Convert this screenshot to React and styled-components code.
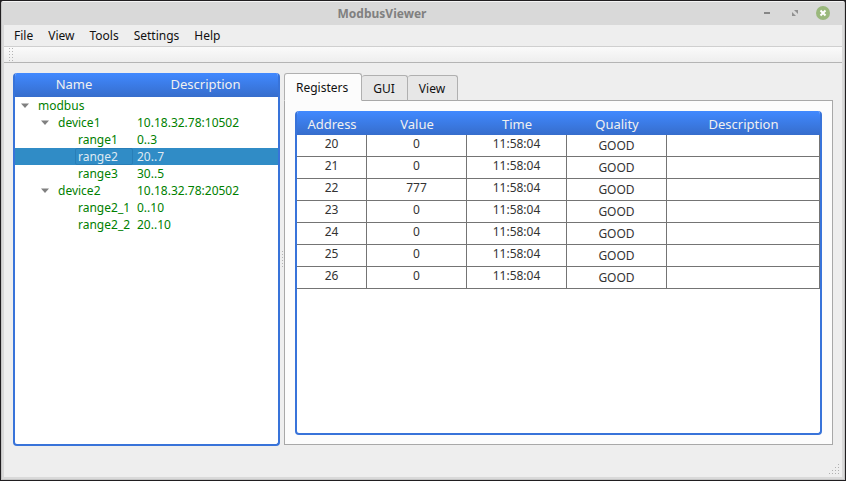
import React, { useState } from "react";
import styled, { createGlobalStyle, css } from "styled-components";

const GlobalStyle = createGlobalStyle`
  * { box-sizing: border-box; }
  body { margin: 0; background: #201e20; }
  button { font: inherit; color: inherit; border: 0; padding: 0; background: none; }
`;

const Desktop = styled.div`
  min-height: 100vh;
  padding: 1px;
  display: flex;
  background: #201e20;
  font: 12px/16px "Noto Sans", sans-serif;
  color: #111;
`;

const Window = styled.div`
  flex: 1;
  display: flex;
  flex-direction: column;
  padding: 0 2px 2px;
  background: #d9d9d9;
  border: 1px solid #c4c4c4;
  border-top-color: #f4f4f4;
  border-radius: 2px 2px 0 0;
`;

const TitleBar = styled.header`
  height: 23px;
  flex: none;
  display: grid;
  grid-template-columns: 1fr auto 1fr;
  align-items: center;
  color: #808080;
`;

const Title = styled.h1`
  grid-column: 2;
  margin: 0;
  padding-right: 82px;
  font-size: 12px;
  line-height: 22px;
  font-weight: 700;
`;

const WindowControls = styled.div`
  display: flex;
  justify-content: flex-end;
  gap: 14px;
  padding: 0 12px 2px 0;
`;

const ControlButton = styled.button`
  width: 14px;
  height: 14px;
  svg { display: block; }
`;

const Client = styled.div`
  flex: 1;
  display: flex;
  flex-direction: column;
  background: #eeeeee;
`;

const MenuBar = styled.nav`
  height: 21px;
  display: flex;
  gap: 15px;
  padding: 0 10px;
`;

const MenuButton = styled.button`
  line-height: 21px;
`;

const ToolBar = styled.div`
  height: 17px;
  padding-left: 5px;
  border-top: 1px solid #cfcfcf;
  border-bottom: 1px solid #b4b4b4;
  background: linear-gradient(#fafafa, #eeeeee);
`;

const Grip = styled.svg`
  display: block;
`;

const Workspace = styled.main`
  flex: 1;
  display: flex;
  padding: 10px 9px 0;
`;

const frame = css`
  border: 2px solid #3873d9;
  border-top: 0;
  border-radius: 4px;
  background: #fff;
  overflow: hidden;
`;

const TreePanel = styled.section`
  ${frame}
  flex: 0 0 267px;
`;

const Splitter = styled.div`
  flex: 0 0 4px;
  display: flex;
  align-items: center;
  justify-content: center;
`;

const SplitterGrip = styled.div`
  width: 1px;
  height: 18px;
  background: repeating-linear-gradient(#b4b4b4 0 1px, transparent 1px 3px);
`;

const Table = styled.table`
  width: 100%;
  table-layout: fixed;
  border-collapse: separate;
  border-spacing: 0;
`;

const HeaderRow = styled.tr`
  background: linear-gradient(#4189ff, #366dcc);
`;

const HeaderCell = styled.th`
  height: 24px;
  padding: ${(p) => (p.$low ? 2 : 0)}px 0 0;
  color: #f0f0f0;
  font-size: 13px;
  font-weight: 400;
  line-height: 22px;
  vertical-align: top;
`;

const Column = styled.col`
  width: ${(p) => (p.$width ? `${p.$width}px` : "auto")};
`;

const TreeRow = styled.tr`
  color: ${(p) => (p.$selected ? "#dfe9f2" : "#008000")};
  background: ${(p) => (p.$selected ? "#308cc6" : "transparent")};
`;

const TreeCell = styled.td`
  height: 17px;
  padding: 0 0 0 4px;
  white-space: nowrap;
`;

const TreeNameCell = styled.td`
  height: 17px;
  padding: 0 0 0 ${(p) => p.$level * 20}px;
`;

const TreeName = styled.div`
  display: flex;
  align-items: center;
  height: 17px;
`;

const Toggle = styled.button`
  width: 20px;
  height: 16px;
  padding-left: 6px;
  flex: none;
  svg { display: block; }
`;

const TreeLabel = styled.span`
  flex: 1;
  height: 17px;
  padding-left: 2px;
  border: 1px solid ${(p) => (p.$selected ? "#287eb7" : "transparent")};
  border-radius: 2px;
  line-height: 15px;
  white-space: nowrap;
`;

const Indent = styled.span`
  flex: 0 0 20px;
`;

const Detail = styled.section`
  flex: 1;
  min-width: 0;
  display: flex;
  flex-direction: column;
  padding-bottom: 1px;
`;

const TabList = styled.div`
  display: flex;
  align-items: flex-end;
  height: 28px;
  margin-bottom: -1px;
  z-index: 1;
`;

const Tab = styled.button`
  height: ${(p) => (p.$active ? 28 : 26)}px;
  padding: ${(p) => (p.$active ? "1px 13px 0 11px" : "2px 12px 0 11px")};
  border: 1px solid #b0b0b0;
  border-left-width: ${(p) => (p.$active ? 1 : 0)}px;
  border-bottom-color: ${(p) => (p.$active ? "#fcfcfc" : "#a8a8a8")};
  border-radius: 3px 3px 0 0;
  background: ${(p) => (p.$active ? "#fcfcfc" : "#e7e7e7")};
  line-height: 22px;
`;

const TabPage = styled.div`
  flex: 1;
  display: flex;
  padding: 10px;
  padding-bottom: 9px;
  border: 1px solid #a8a8a8;
  background: #fcfcfc;
`;

const RegisterPanel = styled.div`
  ${frame}
  flex: 1;
  min-width: 0;
`;

const RegisterCell = styled.td`
  height: 22px;
  padding: ${(p) => (p.$middle ? 2 : 0)}px 0 0;
  border-right: 1px solid #747474;
  border-bottom: 1px solid #747474;
  color: #333;
  line-height: 18px;
  text-align: center;
  vertical-align: top;
`;

const StatusBar = styled.footer`
  height: 31px;
  display: flex;
  align-items: flex-end;
  justify-content: flex-end;
  padding: 2px;
`;

const tree = [
  { level: 0, name: "modbus", info: "", branch: true },
  { level: 1, name: "device1", info: "10.18.32.78:10502", branch: true },
  { level: 2, name: "range1", info: "0..3" },
  { level: 2, name: "range2", info: "20..7" },
  { level: 2, name: "range3", info: "30..5" },
  { level: 1, name: "device2", info: "10.18.32.78:20502", branch: true },
  { level: 2, name: "range2_1", info: "0..10" },
  { level: 2, name: "range2_2", info: "20..10" },
];

const registers = [20, 21, 22, 23, 24, 25, 26].map((address) => ({
  address,
  value: address === 22 ? 777 : 0,
  time: "11:58:04",
  quality: "GOOD",
}));

function DeviceTree() {
  const [selected, setSelected] = useState("range2");
  return (
    <TreePanel aria-label="Devices">
      <Table role="treegrid">
        <colgroup>
          <Column $width={118} />
          <Column />
        </colgroup>
        <thead>
          <HeaderRow>
            <HeaderCell>Name</HeaderCell>
            <HeaderCell>Description</HeaderCell>
          </HeaderRow>
        </thead>
        <tbody>
          {tree.map((node) => (
            <TreeRow
              key={node.name}
              aria-level={node.level + 1}
              aria-selected={node.name === selected}
              $selected={node.name === selected}
              onClick={() => setSelected(node.name)}
            >
              <TreeNameCell $level={node.level}>
                <TreeName>
                  {node.branch ? (
                    <Toggle aria-label={`Collapse ${node.name}`}>
                      <svg width="8" height="5" viewBox="0 0 8 5">
                        <path d="M0 0.5h8L4 5z" fill="#808080" />
                      </svg>
                    </Toggle>
                  ) : (
                    <Indent />
                  )}
                  <TreeLabel $selected={node.name === selected}>{node.name}</TreeLabel>
                </TreeName>
              </TreeNameCell>
              <TreeCell>{node.info}</TreeCell>
            </TreeRow>
          ))}
        </tbody>
      </Table>
    </TreePanel>
  );
}

function RegisterTable() {
  return (
    <RegisterPanel>
      <Table>
        <colgroup>
          <Column $width={70} />
          <Column $width={100} />
          <Column $width={100} />
          <Column $width={100} />
          <Column />
        </colgroup>
        <thead>
          <HeaderRow>
            {["Address", "Value", "Time", "Quality", "Description"].map((label) => (
              <HeaderCell key={label} $low>{label}</HeaderCell>
            ))}
          </HeaderRow>
        </thead>
        <tbody>
          {registers.map((r) => (
            <tr key={r.address}>
              <RegisterCell>{r.address}</RegisterCell>
              <RegisterCell>{r.value}</RegisterCell>
              <RegisterCell>{r.time}</RegisterCell>
              <RegisterCell $middle>{r.quality}</RegisterCell>
              <RegisterCell />
            </tr>
          ))}
        </tbody>
      </Table>
    </RegisterPanel>
  );
}

export default function App() {
  const tabs = ["Registers", "GUI", "View"];
  return (
    <Desktop>
      <GlobalStyle />
      <Window>
        <TitleBar>
          <Title>ModbusViewer</Title>
          <WindowControls>
            <ControlButton aria-label="Minimize">
              <svg width="14" height="14">
                <path d="M4 6h6v2H4z" fill="#868686" />
              </svg>
            </ControlButton>
            <ControlButton aria-label="Restore">
              <svg width="14" height="14" fill="#909090">
                <path d="M6 4h4v4zM4 6v4h4z" />
              </svg>
            </ControlButton>
            <ControlButton aria-label="Close">
              <svg width="14" height="14">
                <circle cx="7" cy="7" r="7" fill="#9ab87c" />
                <path d="M4.5 4.5l5 5M9.5 4.5l-5 5" stroke="#fff" strokeWidth="2" />
              </svg>
            </ControlButton>
          </WindowControls>
        </TitleBar>
        <Client>
          <MenuBar>
            {["File", "View", "Tools", "Settings", "Help"].map((label) => (
              <MenuButton key={label}>{label}</MenuButton>
            ))}
          </MenuBar>
          <ToolBar>
            <Grip width="5" height="15" aria-hidden="true">
              <path
                d="M0.5 1v14M3.5 1v14"
                stroke="#b4b4b4"
                strokeDasharray="1 2"
              />
            </Grip>
          </ToolBar>
          <Workspace>
            <DeviceTree />
            <Splitter>
              <SplitterGrip />
            </Splitter>
            <Detail>
              <TabList role="tablist">
                {tabs.map((label, i) => (
                  <Tab key={label} role="tab" aria-selected={i === 0} $active={i === 0}>
                    {label}
                  </Tab>
                ))}
              </TabList>
              <TabPage role="tabpanel">
                <RegisterTable />
              </TabPage>
            </Detail>
          </Workspace>
          <StatusBar>
            <svg width="11" height="11" fill="#b0b0b0" aria-hidden="true">
              <path d="M9 0h1v1h-1zM6 3h1v1h-1zM9 3h1v1h-1zM3 6h1v1h-1zM6 6h1v1h-1zM9 6h1v1h-1zM0 9h1v1h-1zM3 9h1v1h-1zM6 9h1v1h-1zM9 9h1v1h-1z" />
            </svg>
          </StatusBar>
        </Client>
      </Window>
    </Desktop>
  );
}
